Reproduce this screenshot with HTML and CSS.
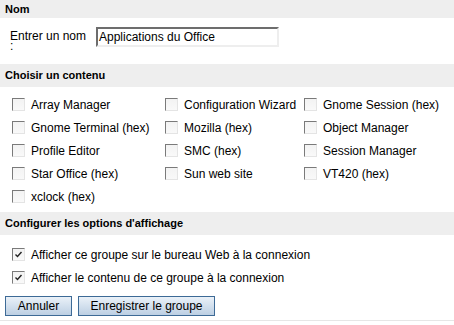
FILE: index.html
```html
<!DOCTYPE html>
<html>
<head>
<meta charset="utf-8">
<link rel="stylesheet" href="styles.css">
</head>
<body>
<div class="page">
  <div class="sec-head first">Nom</div>
  <div class="name-row">
    <label class="name-label">Entrer un nom :</label>
    <div class="text-input">Applications du Office</div>
  </div>
  <div class="sec-head">Choisir un contenu</div>
  <div class="grid">
    <div class="item"><span class="cb"></span><span>Array Manager</span></div>
    <div class="item"><span class="cb"></span><span>Configuration Wizard</span></div>
    <div class="item"><span class="cb"></span><span>Gnome Session (hex)</span></div>
    <div class="item"><span class="cb"></span><span>Gnome Terminal (hex)</span></div>
    <div class="item"><span class="cb"></span><span>Mozilla (hex)</span></div>
    <div class="item"><span class="cb"></span><span>Object Manager</span></div>
    <div class="item"><span class="cb"></span><span>Profile Editor</span></div>
    <div class="item"><span class="cb"></span><span>SMC (hex)</span></div>
    <div class="item"><span class="cb"></span><span>Session Manager</span></div>
    <div class="item"><span class="cb"></span><span>Star Office (hex)</span></div>
    <div class="item"><span class="cb"></span><span>Sun web site</span></div>
    <div class="item"><span class="cb"></span><span>VT420 (hex)</span></div>
    <div class="item"><span class="cb"></span><span>xclock (hex)</span></div>
  </div>
  <div class="sec-head">Configurer les options d'affichage</div>
  <div class="options">
    <div class="item"><span class="cb checked"><svg width="9" height="9" viewBox="0 0 9 9"><path d="M1.5 4.5 L3.5 6.5 L7.5 2" fill="none" stroke="#222" stroke-width="1.4"/></svg></span><span>Afficher ce groupe sur le bureau Web à la connexion</span></div>
    <div class="item"><span class="cb checked"><svg width="9" height="9" viewBox="0 0 9 9"><path d="M1.5 4.5 L3.5 6.5 L7.5 2" fill="none" stroke="#222" stroke-width="1.4"/></svg></span><span>Afficher le contenu de ce groupe à la connexion</span></div>
  </div>
  <div class="buttons">
    <button class="btn btn-cancel">Annuler</button>
    <button class="btn btn-save">Enregistrer le groupe</button>
  </div>
  <div class="bottom-line"></div>
</div>
</body>
</html>
```
FILE: styles.css
```css
html, body {
  margin: 0;
  padding: 0;
  background: #fff;
}
body {
  font-family: "Liberation Sans", Arial, sans-serif;
  font-size: 12px;
  color: #000;
}
.page {
  width: 454px;
  display: flex;
  flex-direction: column;
}
.sec-head {
  background: #eeeeee;
  font-weight: bold;
  font-size: 11px;
  height: 23px;
  line-height: 23px;
  padding-left: 5px;
}
.sec-head.first {
  height: 18px;
  line-height: 18px;
}
.name-row {
  height: 46px;
  display: flex;
  align-items: flex-start;
  padding-left: 10px;
  box-sizing: border-box;
}
.name-label {
  width: 78px;
  margin-top: 13px;
  line-height: 10px;
  margin-right: 8px;
}
.text-input {
  margin-top: 9px;
  width: 178px;
  height: 16px;
  border-top: 2px solid #6d6d6d;
  border-left: 2px solid #6d6d6d;
  border-right: 2px solid #eeeeee;
  border-bottom: 2px solid #eeeeee;
  padding-left: 1px;
  line-height: 16px;
  box-sizing: content-box;
}
.grid {
  display: grid;
  grid-template-columns: 153px 139px auto;
  padding: 6px 0 4px 12px;
}
.item {
  display: flex;
  align-items: center;
  height: 23px;
}
.cb {
  width: 11px;
  height: 11px;
  border-top: 1px solid #7a7a7a;
  border-left: 1px solid #7a7a7a;
  border-right: 1px solid #e4e4e4;
  border-bottom: 1px solid #e4e4e4;
  background: linear-gradient(#f3f3f3, #f9f9f9);
  margin-right: 6px;
  flex-shrink: 0;
  display: flex;
  align-items: center;
  justify-content: center;
}
.cb svg {
  display: block;
}
.options {
  padding: 8px 0 0 12px;
}
.buttons {
  display: flex;
  gap: 6px;
  padding: 7px 0 0 5px;
}
.btn {
  font-family: "Liberation Sans", Arial, sans-serif;
  font-size: 12px;
  color: #000;
  height: 20px;
  border: 1px solid #3d6a96;
  background: linear-gradient(#eaf1f8, #bccfe3);
  padding: 0;
  margin: 0;
  border-radius: 0;
}
.btn-cancel {
  width: 67px;
}
.btn-save {
  width: 137px;
}
.bottom-line {
  margin-top: 4px;
  height: 1px;
  background: #e6e6e6;
}
```
